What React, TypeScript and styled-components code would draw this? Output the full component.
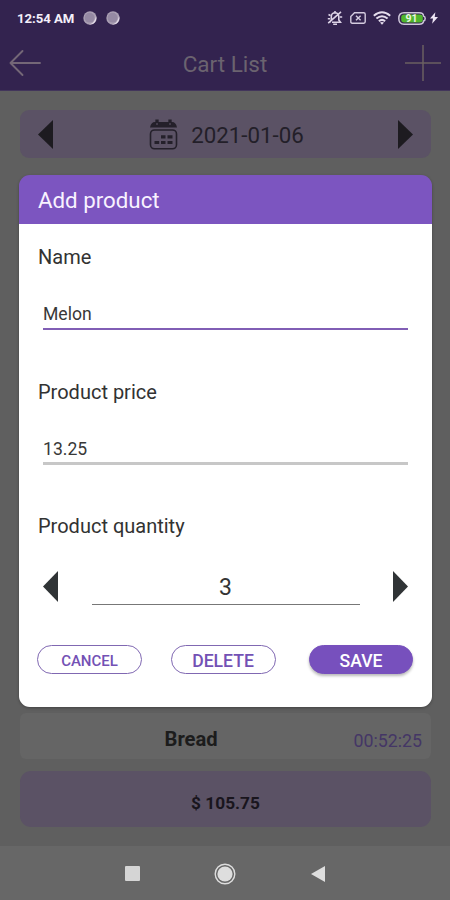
import React from "react";
import styled, { createGlobalStyle } from "styled-components";

const GlobalStyle = createGlobalStyle`
  * { box-sizing: border-box; }
  body { margin: 0; background: #5f5f5f; }
`;

const Screen = styled.div`
  position: relative;
  width: 450px;
  height: 900px;
  display: flex;
  flex-direction: column;
  overflow: hidden;
  background: #5f5f5f;
  font-family: Roboto, "Liberation Sans", sans-serif;
  color: #1d1b20;
`;

const StatusBar = styled.div`
  height: 36px;
  padding: 0 12px 0 17px;
  display: flex;
  align-items: center;
  justify-content: space-between;
  background: #33234f;
`;

const StatusGroup = styled.div<{ $gap: number }>`
  display: flex;
  align-items: center;
  gap: ${(p) => p.$gap}px;
`;

const Clock = styled.span`
  width: 57px;
  padding-top: 1px;
  font-size: 13.2px;
  line-height: 16px;
  font-weight: 700;
  letter-spacing: -0.05px;
  white-space: nowrap;
  color: #f4effa;
`;

const AppBar = styled.header`
  height: 55px;
  padding: 0 9px;
  display: grid;
  grid-template-columns: 36px 1fr 36px;
  align-items: center;
  background: #33234f;
  border-bottom: 1px solid #42355b;
`;

const AppTitle = styled.h1`
  margin: 2px 0 0;
  text-align: center;
  font-size: 22.5px;
  line-height: 28px;
  font-weight: 400;
  color: #6b636f;
`;

const Content = styled.main`
  flex: 1;
  padding: 19px 19px 19px 20px;
  display: flex;
  flex-direction: column;
  justify-content: space-between;
`;

const DateBar = styled.div`
  height: 48px;
  padding: 0 18px;
  display: flex;
  align-items: center;
  justify-content: space-between;
  border-radius: 9px;
  background: #5b5265;
`;

const DateValue = styled.div`
  display: flex;
  align-items: center;
  gap: 13px;
  padding: 1px 0 0 2px;
  font-size: 22.3px;
  line-height: 28px;
  color: #231f29;
`;

const Summary = styled.div`
  display: flex;
  flex-direction: column;
  gap: 12px;
`;

const ProductRow = styled.div`
  height: 46px;
  padding: 6px 9px 0 8px;
  display: grid;
  grid-template-columns: 1fr 121px 1fr;
  align-items: center;
  border-radius: 6px;
  background: #656565;
`;

const ProductName = styled.strong`
  grid-column: 2;
  font-size: 20.2px;
  font-weight: 700;
  color: #1c1c1c;
`;

const ProductTime = styled.span`
  justify-self: end;
  padding-top: 2px;
  font-size: 17.8px;
  color: #443666;
`;

const Total = styled.div`
  height: 56px;
  padding-top: 7px;
  display: flex;
  align-items: center;
  justify-content: center;
  border-radius: 11px;
  background: #5b5265;
  font-size: 17.3px;
  font-weight: 700;
  color: #19151d;
`;

const NavBar = styled.nav`
  height: 54px;
  display: flex;
  justify-content: center;
  align-items: center;
  gap: 74.5px;
  padding: 1px 1px 0 0;
  background: #676767;
`;

const Dialog = styled.section`
  position: absolute;
  top: 175px;
  left: 19px;
  width: 413px;
  height: 532px;
  display: flex;
  flex-direction: column;
  border-radius: 11px;
  background: linear-gradient(#7c55c0 49px, #fff 49px);
  box-shadow: 0 1px 3px rgba(0, 0, 0, 0.3);
`;

const DialogHeader = styled.h2`
  height: 49px;
  margin: 0;
  padding: 1px 19px 0;
  display: flex;
  align-items: center;
  color: #f8f2ff;
  font-size: 22.3px;
  font-weight: 400;
`;

const Form = styled.div`
  padding: 19px 19px 0;
`;

const Field = styled.div`
  height: 134.5px;
`;

const Label = styled.label`
  display: block;
  font-size: 20px;
  line-height: 28px;
  color: #323232;
`;

const Input = styled.input<{ $active?: boolean }>`
  display: block;
  width: 365px;
  height: 37px;
  margin: 22px 0 0 5px;
  padding: ${(p) => (p.$active ? 7 : 8)}px 0 0;
  border: 0;
  border-bottom: ${(p) => (p.$active ? "2px solid #815eb5" : "3px solid #c7c7c7")};
  border-radius: 0;
  outline: none;
  background: transparent;
  font-family: inherit;
  font-size: 17.6px;
  line-height: 24px;
  color: #383838;
`;

const Stepper = styled.div`
  margin: 25px 5px 0 5px;
  display: flex;
  align-items: flex-end;
  justify-content: space-between;
`;

const StepButton = styled.button`
  margin-bottom: 3px;
  padding: 0;
  border: 0;
  background: none;
`;

const Quantity = styled.div`
  width: 268px;
  height: 40px;
  padding-top: 9px;
  border-bottom: 1.5px solid #777;
  text-align: center;
  font-size: 23px;
  line-height: 28px;
  color: #343434;
`;

const Actions = styled.div`
  margin: 40px 0 0 -1px;
  display: grid;
  grid-template-columns: 105px 105px 105px;
  column-gap: 28.5px;
`;

const Button = styled.button<{ $filled?: boolean; $size?: number }>`
  height: 28.5px;
  margin-left: ${(p) => (p.$filled ? 5 : 0)}px;
  padding: 3px 0 0;
  white-space: nowrap;
  border: 1px solid ${(p) => (p.$filled ? "#7750bd" : "#8068b2")};
  border-radius: 15px;
  background: ${(p) => (p.$filled ? "#7750bd" : "#fff")};
  color: ${(p) => (p.$filled ? "#fff" : "#7351b5")};
  box-shadow: ${(p) => (p.$filled ? "0 2px 3px rgba(0,0,0,.28)" : "none")};
  width: ${(p) => (p.$filled ? 104 : 105)}px;
  font-family: inherit;
  font-size: ${(p) => p.$size ?? 17.6}px;
  font-weight: 500;
`;

const Icon = styled.svg`
  display: block;
  flex: none;
`;

function Triangle({ right, width = 15, height = 29, color = "#1d1b20" }: {
  right?: boolean; width?: number; height?: number; color?: string;
}) {
  return (
    <Icon width={width} height={height} viewBox="0 0 15 30" preserveAspectRatio="none">
      <path d={right ? "M0 0L15 15L0 30Z" : "M15 0L0 15L15 30Z"} fill={color} />
    </Icon>
  );
}

function NotificationDot() {
  return (
    <Icon width="14" height="14" viewBox="0 0 14 14">
      <circle cx="7" cy="7" r="6.7" fill="#aa9fb3" />
      <path d="M13 5a6.5 6.5 0 0 1-7 8.5C10 12.5 12 10 13 5Z" fill="#e4dbe9" />
      <circle cx="6.6" cy="6.7" r="4.9" fill="#9589a3" />
    </Icon>
  );
}

function MutedBell() {
  return (
    <Icon width="16" height="16" viewBox="0 0 16 16" fill="none" stroke="#ddd3e7" strokeWidth="1.6">
      <path d="M2.8 12.2L4.3 10V6.5A3.8 3.8 0 0 1 8 2.7A3.8 3.8 0 0 1 11.8 6.5V10L13.4 12.2H5M6.2 14.3H10M8 1V3M1.2 13.2L14 1.8M1.5 4.5L3.4 5.5M.8 8.8H3M12.9 7H15.2" />
    </Icon>
  );
}

function SimCard() {
  return (
    <Icon width="16" height="12" viewBox="0 0 16 12" fill="none" stroke="#d4cbdf" strokeWidth="1.4">
      <path d="M4.5 .8H13.8Q15.2 .8 15.2 2.2V9.8Q15.2 11.2 13.8 11.2H2.2Q.8 11.2 .8 9.8V4.5Z" />
      <path d="M6 3.7L10.6 8.3M10.6 3.7L6 8.3" />
    </Icon>
  );
}

function Wifi() {
  return (
    <Icon width="18" height="14" viewBox="0 0 18 14" fill="none" stroke="#e5dded" strokeWidth="2">
      <path d="M.8 4.7Q9-2.3 17.2 4.7M3.4 7.6Q9 2.8 14.6 7.6M5.9 10.3Q9 7.5 12.1 10.3" />
      <path d="M7 11.6Q9 10.2 11 11.6L9 13.8Z" fill="#e5dded" stroke="none" />
    </Icon>
  );
}

const BatteryGroup = styled.div`
  display: flex;
  align-items: center;
  gap: 4px;
`;

function Battery() {
  return (
    <BatteryGroup>
      <Icon width="28" height="13" viewBox="0 0 28 13">
        <path d="M6 .8H21Q25.5 .8 25.5 4Q27.2 4.5 27.2 6.5T25.5 9Q25.5 12.2 21 12.2H6Q.8 12.2 .8 6.5T6 .8Z" fill="none" stroke="#cec6da" strokeWidth="1.5" />
        <rect x="3.2" y="2.4" width="21.6" height="8.2" rx="3" fill="#50b52c" />
        <text x="13.5" y="10.2" textAnchor="middle" fontSize="10.5" fontWeight="700" fill="#eaf7e2">91</text>
      </Icon>
      <Icon width="8" height="12" viewBox="0 0 9 13"><path d="M6 0L0 7.1H3.4L2.4 13L9 5.3H5.3Z" fill="#eee5f5" /></Icon>
    </BatteryGroup>
  );
}

function Calendar() {
  return (
    <Icon width="29" height="31" viewBox="0 0 29 31" fill="none" stroke="#24202a" strokeWidth="1.6">
      <path d="M1 8.5Q2 3 6 3H23Q27 3 28 8.5Z" fill="#24202a" stroke="none" />
      <path d="M8 .5V6M21 .5V6" strokeWidth="3.3" />
      <path d="M8 4V6M21 4V6" stroke="#5b5265" strokeWidth="1.1" />
      <rect x="1.5" y="11" width="26" height="18.8" rx="4" />
      <path d="M12 17.8H16.5M18.5 17.8H23.5M5.5 23.5H10.2M12 23.5H16.5M18.5 23.5H23.5" strokeWidth="3.2" />
    </Icon>
  );
}

export default function App() {
  return (
    <Screen>
      <GlobalStyle />
      <StatusBar>
        <StatusGroup $gap={9}><Clock>12:54 AM</Clock><NotificationDot /><NotificationDot /></StatusGroup>
        <StatusGroup $gap={7}><MutedBell /><SimCard /><Wifi /><Battery /></StatusGroup>
      </StatusBar>
      <AppBar>
        <Icon width="32" height="28" viewBox="0 0 32 28" fill="none" stroke="#746777" strokeWidth="1.9" strokeLinecap="round" strokeLinejoin="round">
          <path d="M13.5 2L1.5 14L13.5 26M1.5 14H31" />
        </Icon>
        <AppTitle>Cart List</AppTitle>
        <Icon width="36" height="36" viewBox="0 0 36 36" fill="none" stroke="#6b6062" strokeWidth="1.5">
          <path d="M18 0V36M0 18H36" />
        </Icon>
      </AppBar>
      <Content>
        <DateBar>
          <Triangle /><DateValue><Calendar />2021-01-06</DateValue><Triangle right />
        </DateBar>
        <Summary>
          <ProductRow><ProductName>Bread</ProductName><ProductTime>00:52:25</ProductTime></ProductRow>
          <Total>$ 105.75</Total>
        </Summary>
      </Content>
      <NavBar>
        <Icon width="15" height="15"><rect width="15" height="15" rx="1" fill="#d5d5d5" /></Icon>
        <Icon width="22" height="22" viewBox="0 0 22 22"><circle cx="11" cy="11" r="9.8" fill="none" stroke="#ddd" strokeWidth="1.4" /><circle cx="11" cy="11" r="7.6" fill="#dedede" /></Icon>
        <Triangle width={14} height={16} color="#dedede" />
      </NavBar>
      <Dialog role="dialog" aria-labelledby="dialog-title">
        <DialogHeader id="dialog-title">Add product</DialogHeader>
        <Form>
          <Field><Label htmlFor="name">Name</Label><Input id="name" defaultValue="Melon" $active /></Field>
          <Field><Label htmlFor="price">Product price</Label><Input id="price" defaultValue="13.25" /></Field>
          <Label>Product quantity</Label>
          <Stepper>
            <StepButton aria-label="Decrease quantity"><Triangle height={31} color="#303436" /></StepButton>
            <Quantity>3</Quantity>
            <StepButton aria-label="Increase quantity"><Triangle right height={31} color="#303436" /></StepButton>
          </Stepper>
          <Actions>
            <Button $size={15}>CANCEL</Button><Button>DELETE</Button><Button $filled>SAVE</Button>
          </Actions>
        </Form>
      </Dialog>
    </Screen>
  );
}
